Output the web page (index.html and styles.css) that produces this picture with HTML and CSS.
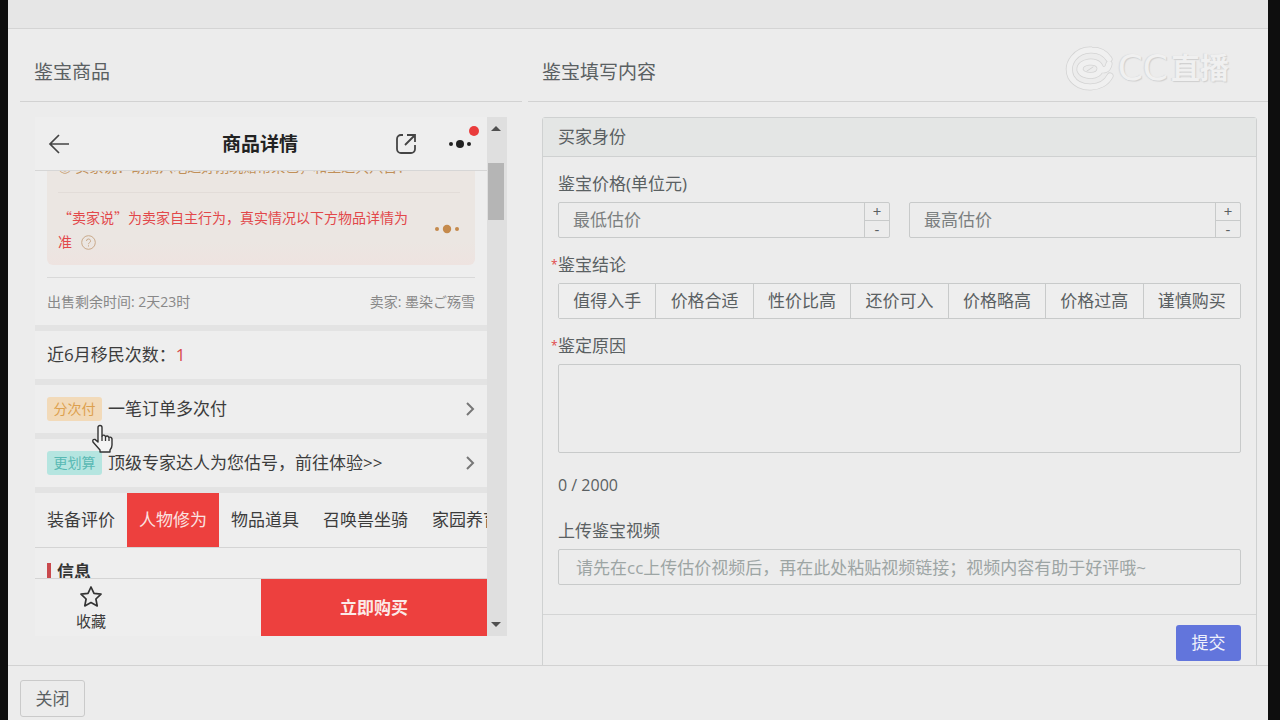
FILE: index.html
```html
<!DOCTYPE html>
<html lang="zh-CN">
<head>
<meta charset="utf-8">
<title>鉴宝</title>
<link rel="stylesheet" href="styles.css">
</head>
<body>
<div class="dialog">
  <div class="dialog-top"></div>
  <main class="dialog-body">
    <section class="col-goods">
      <h2 class="col-title">鉴宝商品</h2>
      <div class="goods-frame">
        <div class="phone">
          <header class="phone-head">
            <button class="icon-btn" aria-label="返回"><svg width="22" height="22" viewBox="0 0 22 22"><path d="M11 2 2 11l9 9M2 11h19" fill="none" stroke="#444" stroke-width="1.7"/></svg></button>
            <h3 class="phone-title">商品详情</h3>
            <div class="phone-tools">
              <button class="icon-btn" aria-label="分享"><svg width="22" height="22" viewBox="0 0 22 22"><path d="M8 2H6a4 4 0 0 0-4 4v10a4 4 0 0 0 4 4h10a4 4 0 0 0 4-4v-4M12 2h8v7M20 2 10 12" fill="none" stroke="#444" stroke-width="1.8"/></svg></button>
              <button class="icon-btn more" aria-label="更多"><svg width="24" height="22" viewBox="0 0 24 22" fill="#222"><circle cx="3" cy="11" r="2"/><circle cx="12" cy="11" r="4"/><circle cx="21" cy="11" r="2"/></svg><span class="red-dot"></span></button>
            </div>
          </header>
          <div class="phone-view">
            <div class="note">
              <p class="note-cut">◎ 卖家说：胡搞六吃过好刚玩赠帮荣已，和生达共八日！</p>
              <div class="note-main">
                <p class="note-text">“卖家说”为卖家自主行为，真实情况以下方物品详情为准 <svg class="help" width="15" height="15" viewBox="0 0 15 15"><circle cx="7.500" cy="7.500" r="6.800" fill="none" stroke="#c9a98a"/><path d="M5.500 6a2 2 0 1 1 2.800 1.800q-.8.400-.8 1.400M7.500 10.300v1.200" fill="none" stroke="#c9a98a"/></svg></p>
                <svg class="note-dots" width="26" height="10" viewBox="0 0 26 10" fill="#c58a4c"><circle cx="3" cy="5" r="2"/><circle cx="13" cy="5" r="4.200"/><circle cx="23" cy="5" r="2"/></svg>
              </div>
            </div>
            <div class="sale-row"><span>出售剩余时间: 2天23时</span><span>卖家: 墨染ご殇雪</span></div>
            <div class="row">近6月移民次数：<span class="red">1</span></div>
            <a class="row" href="#"><span class="tag tag-orange">分次付</span>一笔订单多次付<svg class="chev" width="10" height="14" viewBox="0 0 10 14"><path d="m2 1 6 6-6 6" fill="none" stroke="#777" stroke-width="2"/></svg></a>
            <a class="row" href="#"><span class="tag tag-teal">更划算</span>顶级专家达人为您估号，前往体验&gt;&gt;<svg class="chev" width="10" height="14" viewBox="0 0 10 14"><path d="m2 1 6 6-6 6" fill="none" stroke="#777" stroke-width="2"/></svg></a>
            <nav class="tabs">
              <button class="tab">装备评价</button><button class="tab active">人物修为</button><button class="tab">物品道具</button><button class="tab">召唤兽坐骑</button><button class="tab">家园养育</button>
            </nav>
            <h4 class="info-title">信息</h4>
          </div>
          <footer class="phone-foot">
            <button class="fav"><svg width="24" height="23" viewBox="0 0 24 23"><path d="m12 2 3 6.300 7 .9-5.100 4.800 1.300 6.900L12 17.600l-6.200 3.300L7.100 14 2 9.200l7-.9z" fill="none" stroke="#333" stroke-width="1.700" stroke-linejoin="round"/></svg>收藏</button>
            <button class="buy">立即购买</button>
          </footer>
        </div>
        <div class="scrollbar">
          <svg width="10" height="6" viewBox="0 0 10 6"><path d="M0 6 5 1l5 5z" fill="#505050"/></svg>
          <div class="track"><div class="thumb"></div></div>
          <svg width="10" height="6" viewBox="0 0 10 6"><path d="m0 0 5 5 5-5z" fill="#505050"/></svg>
        </div>
      </div>
    </section>
    <section class="col-form">
      <h2 class="col-title">鉴宝填写内容</h2>
      <form class="card">
        <div class="card-head">买家身份</div>
        <div class="card-body">
          <div class="item">
            <label class="label" for="low">鉴宝价格(单位元)</label>
            <div class="prices">
              <div class="number"><input id="low" class="number-input" type="text" placeholder="最低估价"><div class="steps"><button type="button" class="step">+</button><button type="button" class="step">-</button></div></div>
              <div class="number"><input aria-label="最高估价" class="number-input" type="text" placeholder="最高估价"><div class="steps"><button type="button" class="step">+</button><button type="button" class="step">-</button></div></div>
            </div>
          </div>
          <div class="item">
            <div class="label required" id="verdict">鉴宝结论</div>
            <div class="choices" role="radiogroup" aria-labelledby="verdict">
              <label class="choice"><input type="radio" name="v">值得入手</label>
              <label class="choice"><input type="radio" name="v">价格合适</label>
              <label class="choice"><input type="radio" name="v">性价比高</label>
              <label class="choice"><input type="radio" name="v">还价可入</label>
              <label class="choice"><input type="radio" name="v">价格略高</label>
              <label class="choice"><input type="radio" name="v">价格过高</label>
              <label class="choice"><input type="radio" name="v">谨慎购买</label>
            </div>
          </div>
          <div class="item reason">
            <label class="label required" for="reason">鉴定原因</label>
            <textarea id="reason" class="textarea"></textarea>
            <div class="count">0 / 2000</div>
          </div>
          <div class="item">
            <label class="label" for="video">上传鉴宝视频</label>
            <input id="video" class="text-input" type="text" placeholder="请先在cc上传估价视频后，再在此处粘贴视频链接；视频内容有助于好评哦~">
          </div>
        </div>
        <div class="card-foot"><button type="button" class="submit">提交</button></div>
      </form>
    </section>
  </main>
  <footer class="dialog-foot"><button class="close">关闭</button></footer>
  <div class="watermark">
    <svg width="50" height="46" viewBox="0 0 50 46" fill="none" stroke-linecap="round">
      <g stroke="#d3d3d3" stroke-width="7"><path d="M45 31C38 45 14 46 6 32C0 18 12 4 27 5q11 0 17 9"/><path d="M35 24c0 8-17 9-20 1-1-9 17-11 20-3 2 5 8 3 9-3"/></g>
      <g stroke="#f0f0f0" stroke-width="5.500"><path d="M45 31C38 45 14 46 6 32C0 18 12 4 27 5q11 0 17 9"/><path d="M35 24c0 8-17 9-20 1-1-9 17-11 20-3 2 5 8 3 9-3"/></g>
      <path d="m22 26 6-4" stroke="#d3d3d3"/>
    </svg>
    <span class="mark-cc">CC</span><span class="mark-cn">直播</span>
  </div>
  <svg class="pointer" width="24" height="30" viewBox="0 0 24 30"><path d="M7 18V3.500a2 2 0 0 1 4 0V12q2-2 3.500.6 2-1.600 3.300.8 2.700-1 3.200 1.600v6q0 3-2 5v2H9v-2l-7-8q-1-3 2-2.600z" fill="#f4f4f4" stroke="#333" stroke-width="1.400" stroke-linejoin="round"/><path d="M11 12v5M14.500 13v4M18 14v3" stroke="#333" stroke-width="1.300"/></svg>
</div>
</body>
</html>
```

FILE: styles.css
```css
* { box-sizing: border-box; }
body {
  margin: 0;
  background: #0e0e0e;
  color: #5a6062;
  font: 17px/20px "Open Sans", "Noto Sans CJK SC", sans-serif;
}
h2, h3, h4, p { margin: 0; font-weight: 400; }
button, input, textarea { font: inherit; color: inherit; margin: 0; }
button { padding: 0; border: 0; background: none; white-space: nowrap; }
a { color: inherit; text-decoration: none; }
svg { display: block; flex: none; }

.dialog {
  position: relative;
  display: flex;
  flex-direction: column;
  height: 100vh;
  margin: 0 12px 0 8px;
  background: #ececec;
  overflow: hidden;
}
.dialog-top { flex: none; height: 29px; background: #e6e6e6; border-bottom: 1px solid #d4d4d4; }
.dialog-body { flex: 1; min-height: 0; display: flex; gap: 6px; padding-left: 12px; overflow: hidden; }
.dialog-foot { flex: none; height: 55px; padding: 14px 12px 0; border-top: 1px solid #d2d2d2; }
.close { width: 65px; height: 37px; border: 1px solid #cacaca; border-radius: 3px; }

.col-goods { flex: 0 0 502px; min-width: 0; }
.col-form { flex: 1; min-width: 0; }
.col-title {
  height: 73px;
  padding: 31px 14px 0;
  font-size: 19px;
  line-height: 24px;
  border-bottom: 1px solid #d2d2d2;
}

.goods-frame { display: flex; height: 519px; margin: 15px 15px 0; }
.phone { flex: 1; min-width: 0; display: flex; flex-direction: column; background: #eeeeee; color: #3c3c3c; }
.phone-head {
  flex: none;
  display: grid;
  grid-template-columns: 1fr auto 1fr;
  align-items: center;
  height: 54px;
  padding: 0 15px 0 13px;
  border-bottom: 1px solid #d6d6d6;
}
.phone-title { font-size: 19px; font-weight: 700; color: #222; }
.phone-tools { display: flex; justify-content: flex-end; gap: 31px; }
.icon-btn { position: relative; justify-self: start; }
.red-dot { position: absolute; top: -7px; right: -7px; width: 10px; height: 10px; border-radius: 50%; background: #ea3c3c; }
.phone-view { flex: 1; min-height: 0; overflow: hidden; }
.note {
  margin: 0 12px 12px;
  padding: 0 15px 12px 11px;
  border-radius: 0 0 6px 6px;
  background: linear-gradient(#ebe6e2 75%, #eee3e0);
  font-family: "Noto Sans CJK SC", sans-serif;
  font-size: 14px;
}
.note-cut { display: flex; align-items: flex-end; height: 5px; overflow: hidden; color: #c08f58; white-space: nowrap; }
.note-main { display: flex; align-items: center; margin-top: 16px; padding-top: 12px; border-top: 1px solid #e2dcd8; }
.note-text { flex: 1; min-width: 0; line-height: 24px; color: #e2484a; }
.help { display: inline-block; margin-left: 6px; vertical-align: -3px; }
.note-dots { margin-left: 15px; }
.sale-row {
  display: flex;
  align-items: center;
  justify-content: space-between;
  height: 48px;
  margin: 0 12px;
  border-top: 1px solid #d9d9d9;
  font-size: 14px;
  color: #888;
}
.row { display: flex; align-items: center; height: 54px; padding: 0 12px; border-top: 6px solid #e3e3e3; white-space: nowrap; }
.red { color: #d8484a; }
.tag { width: 55px; margin-right: 6px; border-radius: 3px; font-size: 14px; line-height: 24px; text-align: center; }
.tag-orange { background: #f2dab9; color: #dda04e; }
.tag-teal { background: #b5e5e0; color: #58b9b3; }
.chev { margin-left: auto; }
.tabs { display: flex; height: 61px; border-top: 6px solid #e3e3e3; border-bottom: 1px solid #d4d4d4; overflow: hidden; }
.tab { flex: none; padding: 0 12px; }
.tab.active { background: #ed403e; color: #fbe3e1; }
.info-title { display: flex; align-items: center; margin: 14px 12px 0; font-weight: 700; color: #333; }
.info-title::before { content: ""; width: 4px; height: 18px; margin-right: 6px; background: #c9494d; }
.phone-foot { flex: none; display: flex; justify-content: space-between; height: 58px; border-top: 1px solid #d4d4d4; }
.fav { display: flex; flex-direction: column; align-items: center; justify-content: center; gap: 3px; width: 112px; font-size: 15px; }
.buy { width: 50%; background: #ed403e; color: #fbeae8; font-weight: 700; }

.scrollbar { flex: 0 0 20px; display: flex; flex-direction: column; align-items: center; padding: 8px 2px 8px 0; background: #dfdfdf; }
.track { flex: 1; width: 16px; padding-top: 32px; }
.thumb { height: 57px; background: #b5b5b5; }

.card { height: 600px; margin: 15px 11px 0 14px; border: 1px solid #cfd1d1; border-radius: 3px; }
.card-head { height: 39px; padding: 9px 15px; background: #e4e6e5; border-bottom: 1px solid #cfd1d1; }
.card-body { padding: 17px 15px 12px; }
.item { margin-bottom: 17px; }
.reason { margin-bottom: 26px; }
.label { position: relative; display: block; margin-bottom: 8px; }
.required::before { content: "*"; position: absolute; left: -7px; font-size: 12px; color: #e04848; }
.prices { display: flex; gap: 19px; }
.number { flex: 1; min-width: 0; display: flex; height: 36px; border: 1px solid #c8caca; border-radius: 2px; }
.number-input { flex: 1; min-width: 0; padding: 0 14px; border: 0; background: none; outline: 0; }
.steps { flex: none; display: flex; flex-direction: column; width: 25px; border-left: 1px solid #c8caca; }
.step { flex: 1; line-height: 16px; font-size: 15px; }
.step + .step { border-top: 1px solid #c8caca; }
.choices { display: flex; height: 36px; border: 1px solid #c8caca; border-radius: 2px; }
.choice { position: relative; flex: 1; line-height: 34px; text-align: center; white-space: nowrap; background: #eeeeee; }
.choice + .choice { border-left: 1px solid #c8caca; }
.choice input { position: absolute; inset: 0; opacity: 0; }
.textarea { display: block; width: 100%; height: 89px; border: 1px solid #c8caca; border-radius: 2px; background: none; resize: none; }
.count { margin-top: 22px; font-size: 16px; }
.text-input { display: block; width: 100%; height: 36px; padding: 0 17px; border: 1px solid #c8caca; border-radius: 2px; background: none; }
::placeholder { color: #7b7f80; opacity: 1; }
.text-input::placeholder { color: #9da5a4; }
.card-foot { display: flex; justify-content: flex-end; padding: 10px 15px; border-top: 1px solid #d4d5d5; }
.submit { width: 65px; height: 36px; border-radius: 3px; background: #6275dc; color: #eef0fb; }

.watermark {
  position: absolute;
  top: 45px;
  right: 39px;
  display: flex;
  align-items: center;
  color: #f0f0f0;
  font-size: 29px;
  font-weight: 700;
  line-height: 46px;
  text-shadow: 1px 1px 1px #cfcfcf, -1px 0 1px #d8d8d8;
  pointer-events: none;
}
.mark-cc { margin-left: 3px; font: 36px/46px "DejaVu Sans", sans-serif; }
.mark-cn { margin-left: 3px; }
.pointer { position: absolute; left: 83px; top: 424px; }
```
